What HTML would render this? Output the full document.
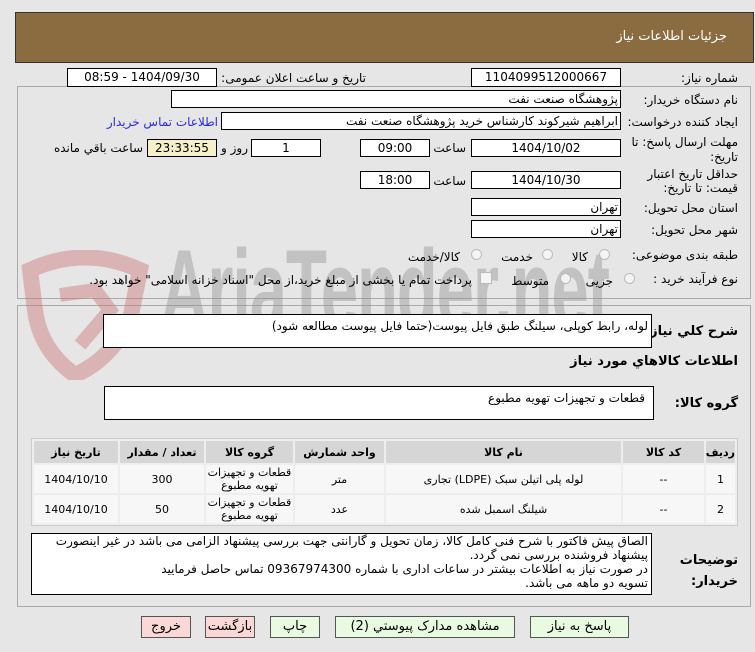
<!DOCTYPE html>
<html><head><meta charset="utf-8"><style>
body{margin:0;width:755px;height:652px;background:#e6e6e6;font-family:"DejaVu Sans",sans-serif;font-size:12px;color:#000;position:relative;overflow:hidden}
.a{position:absolute}
.l{position:absolute;direction:rtl;text-align:right;white-space:nowrap;line-height:14px}
.b{position:absolute;background:#fff;border:1px solid #000;box-sizing:border-box;direction:rtl;text-align:center;line-height:16px;white-space:nowrap;overflow:hidden}
.p{position:absolute;border:1px solid #aaa;box-sizing:border-box}
.r{position:absolute;width:11px;height:11px;border-radius:50%;border:1px solid #bbb;background:#f4f4f4;box-sizing:border-box}
table{position:absolute;border-collapse:separate;border-spacing:2px;background:#eee;border:1px solid #ccc;direction:rtl;table-layout:fixed}
td{background:#f7f7f7;text-align:center;font-size:11px;white-space:nowrap;padding:0;line-height:13px}
th{background:#d6d6d6;font-weight:bold;height:22px;font-size:11px;padding:0;white-space:nowrap}
.btn{position:absolute;height:22px;border:1px solid #555;box-sizing:border-box;text-align:center;line-height:20px;font-size:13px;background:#e8fbe0}
</style></head><body>
<div class="a" style="left:15px;top:12px;width:739px;height:51px;background:#8b6b40;border:1px solid #333;box-sizing:border-box"></div>
<div class="l" style="right:28px;top:30px;color:#fff;font-size:13px">جزئیات اطلاعات نیاز</div>

<div class="p" style="left:17px;top:86px;width:734px;height:213px"></div>
<div class="p" style="left:17px;top:305px;width:734px;height:302px"></div>

<svg class="a" style="left:20px;top:250px" width="130" height="130" viewBox="0 0 130 130"><path d="M10 20 Q65 -5 120 20 L110 70 Q90 110 55 125 Q20 100 15 60 Z" fill="none" stroke="rgba(205,120,120,.45)" stroke-width="16"/><path d="M40 45 L75 40 L90 60 L60 95" fill="none" stroke="rgba(205,120,120,.45)" stroke-width="14"/></svg>
<div class="a" style="left:160px;top:225px;font-size:112px;font-weight:bold;color:rgba(140,140,140,.4);font-family:'Liberation Sans',sans-serif;letter-spacing:-2px;transform:scaleX(0.6);transform-origin:left top;white-space:nowrap">AriaTender.net</div>

<div class="l" style="right:17px;top:71px">شماره نیاز:</div>
<div class="b" style="left:471px;top:68px;width:150px;height:19px">1104099512000667</div>
<div class="l" style="right:389px;top:71px">تاریخ و ساعت اعلان عمومی:</div>
<div class="b" style="left:67px;top:68px;width:150px;height:19px">1404/09/30 - 08:59</div>

<div class="l" style="right:17px;top:93px">نام دستگاه خریدار:</div>
<div class="b" style="left:171px;top:90px;width:450px;height:18px;text-align:right;padding-right:2px">پژوهشگاه صنعت نفت</div>

<div class="l" style="right:17px;top:115px">ایجاد کننده درخواست:</div>
<div class="b" style="left:221px;top:112px;width:400px;height:18px;text-align:right;padding-right:2px">ابراهیم شیرکوند کارشناس خرید پژوهشگاه صنعت نفت</div>
<div class="l" style="right:537px;top:115px;color:#2a2ae0">اطلاعات تماس خریدار</div>

<div class="l" style="right:17px;top:135px;line-height:15px">مهلت ارسال پاسخ: تا<br>تاریخ:</div>
<div class="b" style="left:471px;top:139px;width:150px;height:18px">1404/10/02</div>
<div class="l" style="right:289px;top:141px">ساعت</div>
<div class="b" style="left:360px;top:139px;width:70px;height:18px">09:00</div>
<div class="b" style="left:251px;top:139px;width:70px;height:18px">1</div>
<div class="l" style="right:507px;top:141px">روز و</div>
<div class="b" style="left:147px;top:139px;width:70px;height:18px;background:#f5f0c8">23:33:55</div>
<div class="l" style="right:612px;top:141px">ساعت باقي مانده</div>

<div class="l" style="right:17px;top:167px">حداقل تاریخ اعتبار<br>قیمت: تا تاریخ:</div>
<div class="b" style="left:471px;top:171px;width:150px;height:18px">1404/10/30</div>
<div class="l" style="right:289px;top:174px">ساعت</div>
<div class="b" style="left:360px;top:171px;width:70px;height:18px">18:00</div>

<div class="l" style="right:17px;top:201px">استان محل تحویل:</div>
<div class="b" style="left:471px;top:198px;width:150px;height:18px;text-align:right;padding-right:2px">تهران</div>
<div class="l" style="right:17px;top:223px">شهر محل تحویل:</div>
<div class="b" style="left:471px;top:220px;width:150px;height:18px;text-align:right;padding-right:2px">تهران</div>

<div class="l" style="right:17px;top:248px">طبقه بندی موضوعی:</div>
<div class="r" style="left:599px;top:249px"></div><div class="l" style="right:167px;top:250px">کالا</div>
<div class="r" style="left:542px;top:249px"></div><div class="l" style="right:222px;top:250px">خدمت</div>
<div class="r" style="left:471px;top:249px"></div><div class="l" style="right:295px;top:250px">کالا/خدمت</div>

<div class="l" style="right:17px;top:272px">نوع فرآیند خرید :</div>
<div class="r" style="left:624px;top:273px"></div><div class="l" style="right:142px;top:274px">جزیی</div>
<div class="r" style="left:560px;top:273px"></div><div class="l" style="right:206px;top:274px">متوسط</div>
<div class="a" style="left:480px;top:272px;width:12px;height:12px;border:1px solid #bbb;background:#f4f4f4;box-sizing:border-box"></div>
<div class="l" style="right:283px;top:273px">پرداخت تمام یا بخشی از مبلغ خرید،از محل "اسناد خزانه اسلامی" خواهد بود.</div>

<div class="l" style="right:17px;top:325px;font-weight:bold;font-size:13px">شرح کلي نياز:</div>
<div class="b" style="left:103px;top:314px;width:549px;height:34px;text-align:right;padding-right:3px;line-height:22px">لوله، رابط کوپلی، سیلنگ طبق فایل پیوست(حتما فایل پیوست مطالعه شود)</div>
<div class="l" style="right:17px;top:355px;font-weight:bold;font-size:13px">اطلاعات کالاهاي مورد نياز</div>
<div class="l" style="right:17px;top:397px;font-weight:bold;font-size:13px">گروه کالا:</div>
<div class="b" style="left:104px;top:386px;width:550px;height:34px;text-align:right;padding-right:8px;line-height:22px">قطعات و تجهیزات تهویه مطبوع</div>

<table style="left:31px;top:438px;width:707px">
<colgroup><col style="width:29px"><col style="width:81px"><col style="width:235px"><col style="width:89px"><col style="width:87px"><col style="width:84px"><col></colgroup>
<tr><th>ردیف</th><th>کد کالا</th><th>نام کالا</th><th>واحد شمارش</th><th>گروه کالا</th><th>تعداد / مقدار</th><th>تاریخ نیاز</th></tr>
<tr style="height:28px"><td>1</td><td>--</td><td>لوله پلی اتیلن سبک (LDPE) تجاری</td><td>متر</td><td>قطعات و تجهیزات<br>تهویه مطبوع</td><td>300</td><td>1404/10/10</td></tr>
<tr style="height:28px"><td>2</td><td>--</td><td>شیلنگ اسمبل شده</td><td>عدد</td><td>قطعات و تجهیزات<br>تهویه مطبوع</td><td>50</td><td>1404/10/10</td></tr>
</table>

<div class="l" style="right:17px;top:550px;font-weight:bold;font-size:13px;line-height:21px">توضیحات<br>خریدار:</div>
<div class="b" style="left:31px;top:533px;width:621px;height:62px;text-align:right;padding-right:3px;padding-left:12px;line-height:14px;white-space:normal;font-size:12px">الصاق پیش فاکتور با شرح فنی کامل کالا، زمان تحویل و گارانتی جهت بررسی پیشنهاد الزامی می باشد در غیر اینصورت پیشنهاد فروشنده بررسی نمی گردد.<br>در صورت نیاز به اطلاعات بیشتر در ساعات اداری با شماره 09367974300 تماس حاصل فرمایید<br>تسویه دو ماهه می باشد.</div>

<div class="btn" style="left:530px;top:616px;width:99px">پاسخ به نیاز</div>
<div class="btn" style="left:335px;top:616px;width:180px">مشاهده مدارک پیوستي (2)</div>
<div class="btn" style="left:270px;top:616px;width:50px">چاپ</div>
<div class="btn" style="left:205px;top:616px;width:50px;background:#fbd8d8">بازگشت</div>
<div class="btn" style="left:141px;top:616px;width:50px;background:#fbd8d8">خروج</div>
</body></html>
